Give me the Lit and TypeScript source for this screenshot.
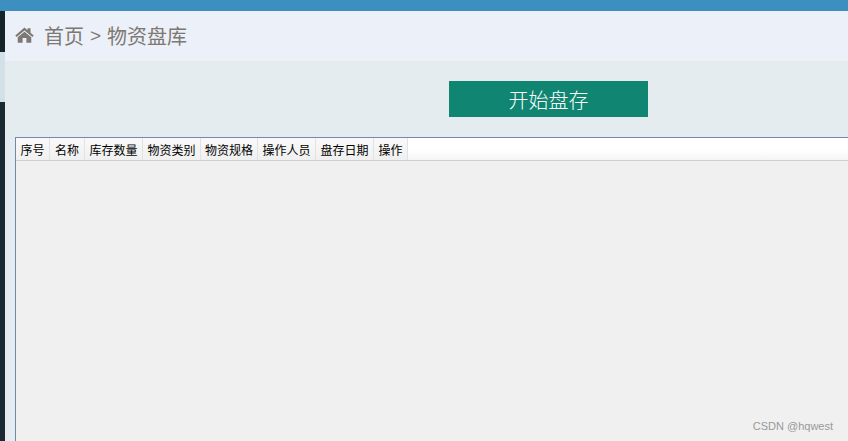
import { LitElement, html, css } from "lit";
import { customElement } from "lit/decorators.js";

const COLS: [string, number][] = [
  ["序号", 34], ["名称", 35], ["库存数量", 58], ["物资类别", 58],
  ["物资规格", 57], ["操作人员", 58], ["盘存日期", 58], ["操作", 34],
];

@customElement("app-root")
export class AppRoot extends LitElement {
  static styles = css`
    :host { display: block; width: 848px; height: 441px; overflow: hidden; position: relative;
      font-family: "Liberation Sans", "Noto Sans CJK SC", sans-serif; }
    .top { height: 11px; background: #3d8fbf; }
    .body { display: flex; height: 430px; }
    .rail { width: 5px; flex: none; display: flex; flex-direction: column; background: #1b2a30; }
    .rail .a { height: 41px; background: #17232b; }
    .rail .b { height: 50px; background: #d3e0e7; }
    .main { flex: 1; min-width: 0; background: #e4ecef; display: flex; flex-direction: column; }
    .crumb { box-sizing: border-box; height: 50px; flex: none; background: #ecf0f9; display: flex; align-items: center;
      padding: 0 0 2px 10px; color: #7d7873; font-size: 20px; }
    .crumb svg { width: 19px; height: 16px; margin-right: 10px; fill: #7d7873; }
    .crumb .sep { margin: 0 6px; font-weight: 300; font-size: 19px; padding-top: 2px; }
    .actions { box-sizing: border-box; height: 76px; flex: none; display: flex; align-items: flex-start; padding: 20px 0 0 444px; }
    .btn { width: 199px; height: 36px; background: #108672; color: #fff; font-size: 20px; font-weight: 300;
      display: flex; align-items: center; justify-content: center; }
    .grid { margin-left: 10px; flex: 1; border: 1px solid #6f8ba8; border-right: none; border-bottom: none;
      background: #f0f0f0; }
    .head { display: flex; height: 22px; border-bottom: 1px solid #d0d0d0;
      background: linear-gradient(#ffffff 0%, #ffffff 55%, #f4f4f4 100%); }
    .cell { box-sizing: border-box; display: flex; align-items: center; justify-content: center;
      font-size: 12px; color: #000; border-right: 1px solid #e2e2e2; background: linear-gradient(#f9f9f9, #f0f0f0); }
    .mark { position: absolute; right: 15px; bottom: 9px; font-size: 11px; color: #999; }
  `;

  render() {
    return html`
      <div class="top"></div>
      <div class="body">
        <div class="rail"><div class="a"></div><div class="b"></div></div>
        <div class="main">
          <div class="crumb">
            <svg viewBox="0 0 20 17"><path d="M10 0.6 L0.2 8.9 L1.6 10.6 L10 3.6 L18.4 10.6 L19.8 8.9 L16.4 6.1 V1.4 H13.2 V3.4 Z M10 5 L2.8 11 V16.8 H8 V11.6 H12 V16.8 H17.2 V11 Z"/></svg>
            <span>首页</span><span class="sep">&gt;</span><span>物资盘库</span>
          </div>
          <div class="actions"><div class="btn">开始盘存</div></div>
          <div class="grid">
            <div class="head">
              ${COLS.map(([t, w]) => html`<div class="cell" style="width:${w}px">${t}</div>`)}
            </div>
          </div>
        </div>
      </div>
      <div class="mark">CSDN @hqwest</div>
    `;
  }
}
